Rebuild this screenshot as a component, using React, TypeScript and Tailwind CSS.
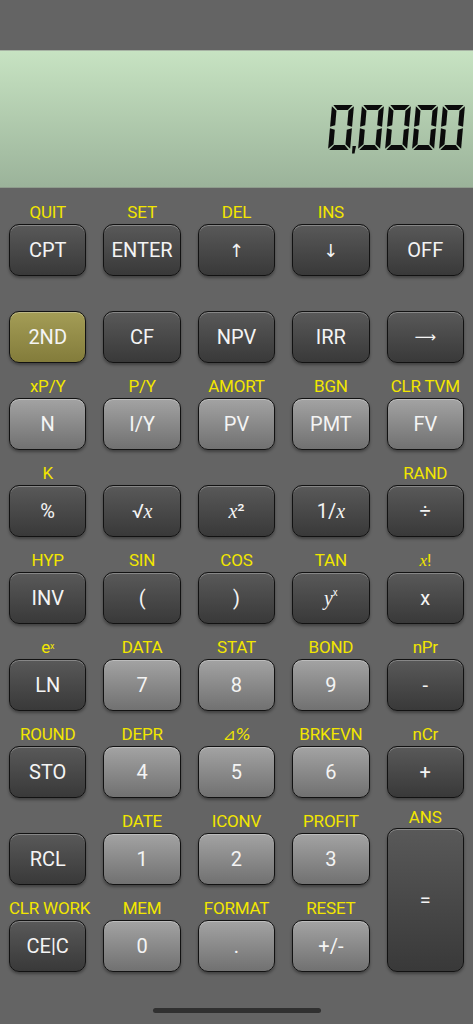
import React from 'react';

type Tone = 'dark' | 'light' | 'olive';

interface KeyDef {
  top?: React.ReactNode;
  face: React.ReactNode;
  tone: Tone;
}

const toneClass: Record<Tone, string> = {
  dark: 'bg-linear-to-b from-[#595959] to-[#393939]',
  light: 'bg-linear-to-b from-[#a3a3a3] to-[#717171]',
  olive: 'bg-linear-to-b from-[#a49d56] to-[#837c3b]',
};

function It({ children }: { children: React.ReactNode }) {
  return <span className="font-['Liberation_Serif',serif] italic">{children}</span>;
}

const d = 'dark' as const;
const l = 'light' as const;

const rows: KeyDef[][] = [
  [
    { top: 'QUIT', face: 'CPT', tone: d },
    { top: 'SET', face: 'ENTER', tone: d },
    { top: 'DEL', face: <span className="font-['DejaVu_Sans',sans-serif] text-[18px]">↑</span>, tone: d },
    { top: 'INS', face: <span className="font-['DejaVu_Sans',sans-serif] text-[18px]">↓</span>, tone: d },
    { face: 'OFF', tone: d },
  ],
  [
    { face: '2ND', tone: 'olive' },
    { face: 'CF', tone: d },
    { face: 'NPV', tone: d },
    { face: 'IRR', tone: d },
    { face: <span className="font-['DejaVu_Sans',sans-serif] text-[15px]">⟶</span>, tone: d },
  ],
  [
    { top: 'xP/Y', face: 'N', tone: l },
    { top: 'P/Y', face: 'I/Y', tone: l },
    { top: 'AMORT', face: 'PV', tone: l },
    { top: 'BGN', face: 'PMT', tone: l },
    { top: 'CLR TVM', face: 'FV', tone: l },
  ],
  [
    { top: 'K', face: '%', tone: d },
    { face: <>√<It>x</It></>, tone: d },
    { face: <><It>x</It>²</>, tone: d },
    { face: <>1/<It>x</It></>, tone: d },
    { top: 'RAND', face: '÷', tone: d },
  ],
  [
    { top: 'HYP', face: 'INV', tone: d },
    { top: 'SIN', face: '(', tone: d },
    { top: 'COS', face: ')', tone: d },
    { top: 'TAN', face: <><It>y</It><sup className="text-[10px]">x</sup></>, tone: d },
    { top: <><It>x</It>!</>, face: 'x', tone: d },
  ],
  [
    { top: <>e<sup className="text-[9px]">x</sup></>, face: 'LN', tone: d },
    { top: 'DATA', face: '7', tone: l },
    { top: 'STAT', face: '8', tone: l },
    { top: 'BOND', face: '9', tone: l },
    { top: 'nPr', face: '-', tone: d },
  ],
  [
    { top: 'ROUND', face: 'STO', tone: d },
    { top: 'DEPR', face: '4', tone: l },
    { top: <span className="font-['DejaVu_Sans',sans-serif] italic text-[16px]">⊿%</span>, face: '5', tone: l },
    { top: 'BRKEVN', face: '6', tone: l },
    { top: 'nCr', face: '+', tone: d },
  ],
  [
    { face: 'RCL', tone: d },
    { top: 'DATE', face: '1', tone: l },
    { top: 'ICONV', face: '2', tone: l },
    { top: 'PROFIT', face: '3', tone: l },
  ],
  [
    { top: 'CLR WORK', face: 'CE|C', tone: d },
    { top: 'MEM', face: '0', tone: l },
    { top: 'FORMAT', face: '.', tone: l },
    { top: 'RESET', face: '+/-', tone: l },
  ],
];

const keyShell =
  'rounded-[10px] border-[1.5px] border-[#121212] text-[20px] text-[#f4f4f4] flex items-center justify-center shadow-[inset_0_1px_0_rgba(255,255,255,0.28),0_2px_3px_rgba(0,0,0,0.35)]';

function Key({ top, face, tone }: KeyDef) {
  return (
    <div className="flex flex-col">
      <div className="h-[24px] text-[17px] leading-[24px] text-center text-[#f2e600] whitespace-nowrap tracking-[-0.2px]">{top}</div>
      <button type="button" className={`h-[52px] ${keyShell} ${toneClass[tone]}`}>
        {face}
      </button>
    </div>
  );
}

// seven-segment "0" with a slight forward lean
const W = 22;
const H = 45;
const T = 5;
const G = 0.8;
const LEAN = 4 / H;

const zeroSegments: [number, number][][] = [
  [[G + 0.5, 0], [W - G - 0.5, 0], [W - T - G, T], [T + G, T]],
  [[0, G + 0.5], [T, T + G], [T, H / 2 - G - 1.5], [0, H / 2 - G]],
  [[W, G + 0.5], [W, H / 2 - G], [W - T, H / 2 - G - 1.5], [W - T, T + G]],
  [[0, H / 2 + G], [T, H / 2 + G + 1.5], [T, H - T - G], [0, H - G - 0.5]],
  [[W, H / 2 + G], [W, H - G - 0.5], [W - T, H - T - G], [W - T, H / 2 + G + 1.5]],
  [[G + 0.5, H], [T + G, H - T], [W - T - G, H - T], [W - G - 0.5, H]],
];

function lean(pts: [number, number][], ox: number) {
  return pts.map(([x, y]) => `${(x + (H - y) * LEAN + ox).toFixed(2)},${y}`).join(' ');
}

function LcdReadout() {
  const offsets = [0, 30, 57, 84, 111];
  return (
    <svg width="138" height="49" viewBox="0 0 138 49">
      {offsets.map((ox) =>
        zeroSegments.map((seg, i) => <polygon key={`${ox}-${i}`} points={lean(seg, ox)} fill="#0b0b0b" />)
      )}
      <polygon points="24.5,41 28,41 26.5,48.5 24,48.5" fill="#0b0b0b" />
    </svg>
  );
}

export default function App() {
  return (
    <div className="w-[473px] h-[1024px] bg-[#646464] flex flex-col font-['Roboto',sans-serif]">
      <div className="h-[50px] shrink-0" />
      <div className="h-[138px] shrink-0 border-t border-b border-t-[#a7b3a4] border-b-[#8e9c8c] bg-linear-to-b from-[#c7e3c2] to-[#9bb39a] flex justify-end items-start pt-[54px] pr-[7px]">
        <LcdReadout />
      </div>
      <div className="grid grid-cols-5 grid-rows-[repeat(9,76px)] gap-x-[17px] gap-y-[11px] px-[9px] pt-[12px]">
        <div className="col-start-5 row-start-8 row-span-2 flex flex-col">
          <div className="h-[16px] text-[17px] leading-[16px] text-center text-[#f2e600]">ANS</div>
          <button type="button" className={`mt-[3px] flex-1 ${keyShell} ${toneClass.dark}`}>
            =
          </button>
        </div>
        {rows.flat().map((k, i) => (
          <Key key={i} {...k} />
        ))}
      </div>
      <div className="flex justify-center mt-[36px]">
        <div className="w-[168px] h-[5px] rounded-full bg-[#303030]" />
      </div>
    </div>
  );
}
